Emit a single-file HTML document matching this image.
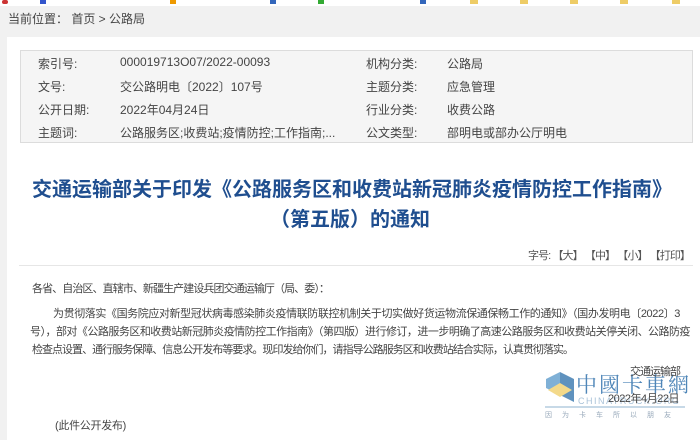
<!DOCTYPE html>
<html><head><meta charset="utf-8">
<style>
*{margin:0;padding:0;box-sizing:border-box}
body{width:700px;height:440px;overflow:hidden;background:#fff;font-family:"Liberation Sans","Noto Sans CJK SC",sans-serif;color:#333;position:relative}
.abs{position:absolute;white-space:nowrap}
.top{position:absolute;left:0;top:0;width:700px;height:6px;background:#fff}
.gray{position:absolute;left:0;top:6px;width:700px;height:31px;background:#f1f1f1}
.strip{position:absolute;left:0;top:37px;width:7px;height:403px;background:#f1f1f1}
.box{position:absolute;left:20px;top:50px;width:673px;height:93px;background:#f5f5f5;border:1px solid #dcdcdc}
.t{font-size:12px;color:#444}
.title{position:absolute;left:0;width:700px;text-align:center;font-size:20px;font-weight:bold;color:#1f4e8f;white-space:nowrap}
.b{font-size:11px;color:#444;letter-spacing:-0.5px}
</style></head><body>
<div class="top">
<span class="abs" style="left:2px;top:0;width:6px;height:4px;background:#c33;border-radius:2px"></span>
<span class="abs" style="left:40px;top:0;width:6px;height:4px;background:#35c"></span>
<span class="abs" style="left:170px;top:0;width:6px;height:4px;background:#e90"></span>
<span class="abs" style="left:270px;top:0;width:6px;height:4px;background:#36b"></span>
<span class="abs" style="left:318px;top:0;width:6px;height:4px;background:#3a3"></span>
<span class="abs" style="left:420px;top:0;width:6px;height:4px;background:#36b"></span>
<span class="abs" style="left:470px;top:0;width:8px;height:4px;background:#ec6"></span>
<span class="abs" style="left:520px;top:0;width:8px;height:4px;background:#ec6"></span>
<span class="abs" style="left:570px;top:0;width:8px;height:4px;background:#ec6"></span>
<span class="abs" style="left:620px;top:0;width:8px;height:4px;background:#ec6"></span>
<span class="abs" style="left:672px;top:0;width:8px;height:4px;background:#ec6"></span>
</div>
<div class="gray"></div>
<div class="abs t" style="left:8px;top:10px;font-size:12px;color:#444">当前位置： 首页 &gt; 公路局</div>
<div class="strip"></div>
<div class="box"></div>
<div class="abs t" style="left:38px;top:55px">索引号:</div>
<div class="abs t" style="left:120px;top:55px">000019713O07/2022-00093</div>
<div class="abs t" style="left:38px;top:78px">文号:</div>
<div class="abs t" style="left:120px;top:78px">交公路明电〔2022〕107号</div>
<div class="abs t" style="left:38px;top:101px">公开日期:</div>
<div class="abs t" style="left:120px;top:101px">2022年04月24日</div>
<div class="abs t" style="left:38px;top:124px">主题词:</div>
<div class="abs t" style="left:120px;top:124px">公路服务区;收费站;疫情防控;工作指南;...</div>
<div class="abs t" style="left:366px;top:55px">机构分类:</div>
<div class="abs t" style="left:447px;top:55px">公路局</div>
<div class="abs t" style="left:366px;top:78px">主题分类:</div>
<div class="abs t" style="left:447px;top:78px">应急管理</div>
<div class="abs t" style="left:366px;top:101px">行业分类:</div>
<div class="abs t" style="left:447px;top:101px">收费公路</div>
<div class="abs t" style="left:366px;top:124px">公文类型:</div>
<div class="abs t" style="left:447px;top:124px">部明电或部办公厅明电</div>
<div class="title" style="top:173px;left:2px">交通运输部关于印发《公路服务区和收费站新冠肺炎疫情防控工作指南》</div>
<div class="title" style="top:203px">（第五版）的通知</div>
<div class="abs fit" style="left:528px;top:247px;font-size:11px;color:#555" title="690">字号: 【大】 【中】 【小】 【打印】</div>
<div class="abs" style="left:19px;top:265px;width:674px;height:1px;background:#e6e6e6"></div>
<div class="abs b fit" style="left:32px;top:280px" title="329">各省、自治区、直辖市、新疆生产建设兵团交通运输厅（局、委）：</div>
<div class="abs b fit" style="left:53px;top:305px" title="680">为贯彻落实《国务院应对新型冠状病毒感染肺炎疫情联防联控机制关于切实做好货运物流保通保畅工作的通知》（国办发明电〔2022〕3</div>
<div class="abs b fit" style="left:30px;top:323px" title="690">号），部对《公路服务区和收费站新冠肺炎疫情防控工作指南》（第四版）进行修订，进一步明确了高速公路服务区和收费站关停关闭、公路防疫</div>
<div class="abs b fit" style="left:32px;top:341px" title="573">检查点设置、通行服务保障、信息公开发布等要求。现印发给你们，请指导公路服务区和收费站结合实际，认真贯彻落实。</div>
<svg class="abs" style="left:540px;top:365px" width="160" height="58">
<polygon points="6,14 20,7 20,30 6,23" fill="#7fb0d6"/>
<polygon points="20,7 34,14 34,37 20,30" fill="#5f92be"/>
<polygon points="8,25 20,18 32,25 20,32" fill="#f3d98a"/>
<text x="36" y="27" font-size="21" fill="#4f86b8" font-family="Noto Serif CJK SC,serif" letter-spacing="2">中國卡車網</text>
<text x="38" y="39" font-size="9" fill="#a9c2d8" font-family="Liberation Sans,sans-serif" letter-spacing="1.5">CHINATRUCK.ORG</text>
<line x1="5" y1="42" x2="145" y2="42" stroke="#8fb3cf" stroke-width="1"/>
<text x="5" y="52" font-size="7" fill="#9ab" letter-spacing="10" font-family="Noto Sans CJK SC,sans-serif">因为卡车所以朋友</text>
</svg>
<div class="abs b fit" style="left:630px;top:363px" title="680">交通运输部</div>
<div class="abs b fit" style="left:608px;top:390px" title="679">2022年4月22日</div>
<div class="abs b fit" style="left:55px;top:417px" title="126">(此件公开发布)</div>
<script>
document.querySelectorAll('.fit').forEach(function(e){
  var target=parseFloat(e.getAttribute('title'));
  e.removeAttribute('title');
  e.style.letterSpacing='0px';
  var left=e.offsetLeft,w=e.getBoundingClientRect().width;
  var n=e.textContent.length;
  e.style.letterSpacing=((target-left-w)/n)+'px';
});
</script>
</body></html>
